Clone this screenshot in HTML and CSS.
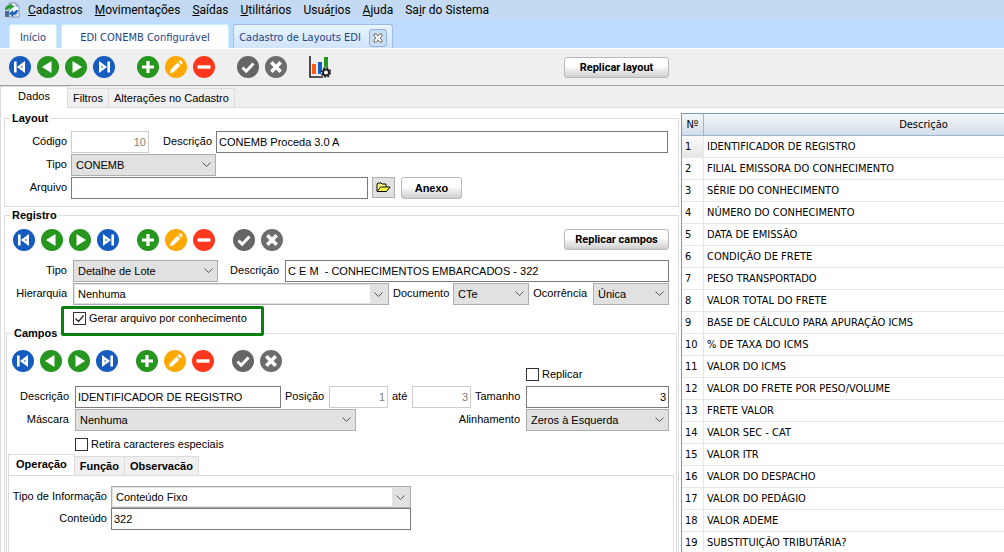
FILE: index.html
```html
<!DOCTYPE html>
<html lang="pt-BR">
<head>
  <meta charset="UTF-8">
  <meta name="viewport" content="width=device-width, initial-scale=1.0">
  <title>Cadastro de Layouts EDI</title>
  <link rel="stylesheet" href="styles.css">
</head>
<body>
  <!-- ícones -->
  <svg class="sprite" aria-hidden="true">
    <symbol id="i-first" viewBox="0 0 22 22"><circle cx="11" cy="11" r="11" fill="#165cbe"/><path d="M5 5.500h2.600v11H5z M16 5v12L7.900 11z" fill="#fff"/><path d="M13.400 9.700v2.600L11.600 11z" fill="#165cbe"/></symbol>
    <symbol id="i-prev" viewBox="0 0 22 22"><circle cx="11" cy="11" r="11" fill="#26961e"/><path d="M14.500 5v12L5 11z" fill="#fff"/></symbol>
    <symbol id="i-next" viewBox="0 0 22 22"><circle cx="11" cy="11" r="11" fill="#26961e"/><path d="M7.500 5v12l9.500-6z" fill="#fff"/></symbol>
    <symbol id="i-last" viewBox="0 0 22 22"><circle cx="11" cy="11" r="11" fill="#165cbe"/><path d="M14.400 5.500H17v11h-2.600z M6 5v12l8.100-6z" fill="#fff"/><path d="M8.600 9.700v2.600l1.800-1.300z" fill="#165cbe"/></symbol>
    <symbol id="i-add" viewBox="0 0 22 22"><circle cx="11" cy="11" r="11" fill="#26961e"/><path d="M11 5v12M5 11h12" stroke="#fff" stroke-width="3.200"/></symbol>
    <symbol id="i-edit" viewBox="0 0 22 22"><circle cx="11" cy="11" r="11" fill="#ffa800"/><path d="M5 17l.8-3.600 6.800-6.800 2.800 2.800-6.800 6.800z M13.500 5.700l1.100-1.100q.7-.5 1.300 0l1.500 1.500q.5.600 0 1.300l-1.100 1.100z" fill="#fff"/></symbol>
    <symbol id="i-del" viewBox="0 0 22 22"><circle cx="11" cy="11" r="11" fill="#ff371d"/><path d="M4.500 11h13" stroke="#fff" stroke-width="3.400"/></symbol>
    <symbol id="i-ok" viewBox="0 0 22 22"><circle cx="11" cy="11" r="11" fill="#666"/><path d="M5.500 11.500l3.700 3.700 7.300-7.700" fill="none" stroke="#fff" stroke-width="3"/></symbol>
    <symbol id="i-cancel" viewBox="0 0 22 22"><circle cx="11" cy="11" r="11" fill="#6c6c6c"/><path d="M6.300 6.300l9.400 9.400M15.700 6.300l-9.400 9.400" stroke="#fff" stroke-width="3.600"/></symbol>
  </svg>

  <nav class="menu">
    <svg class="logo" viewBox="0 0 16 16" aria-hidden="true">
      <path d="M5 1h7l3 3v11H5z" fill="#f4f7fb" stroke="#7c93b4"/>
      <path d="M12 1v3h3" fill="#c9d6e8" stroke="#7c93b4"/>
      <path d="M7 4.500h4M8 13h5" stroke="#9db3d0"/>
      <path d="M1 8q0-5 5-5V1l4 3.500L6 8V6Q4 6 3 8z" fill="#2d9a35"/>
      <path d="M14 8q0 5-5 5v2l-4-3.500L9 8v2q2 0 3-2z" fill="#2763b8"/>
      <path d="M1 9h4v6H1z" fill="#4c6f98"/>
    </svg>
    <a href="#"><u>C</u>adastros</a>
    <a href="#"><u>M</u>ovimentações</a>
    <a href="#"><u>S</u>aídas</a>
    <a href="#"><u>U</u>tilitários</a>
    <a href="#">Usuá<u>r</u>ios</a>
    <a href="#"><u>A</u>juda</a>
    <a href="#">Sa<u>i</u>r do Sistema</a>
  </nav>

  <div class="windows">
    <button class="win win-home">Início</button>
    <button class="win win-edi">EDI CONEMB Configurável</button>
    <div class="win active">
      <span>Cadastro de Layouts EDI</span>
      <button class="close" aria-label="Fechar">
        <svg viewBox="0 0 10 10" width="10" height="10"><path d="M1 1h2.500L5 3l1.500-2H9v2L7 5l2 2v2H6.500L5 7 3.500 9H1V7l2-2-2-2z" fill="#fff" stroke="#6e6e58"/></svg>
      </button>
    </div>
  </div>

  <div class="toolbar">
    <div class="toolbar-left">
      <div class="nav nav-main">
        <div class="group">
          <button aria-label="Primeiro"><svg><use href="#i-first"/></svg></button>
          <button aria-label="Anterior"><svg><use href="#i-prev"/></svg></button>
          <button aria-label="Próximo"><svg><use href="#i-next"/></svg></button>
          <button aria-label="Último"><svg><use href="#i-last"/></svg></button>
        </div>
        <div class="group">
          <button aria-label="Incluir"><svg><use href="#i-add"/></svg></button>
          <button aria-label="Alterar"><svg><use href="#i-edit"/></svg></button>
          <button aria-label="Excluir"><svg><use href="#i-del"/></svg></button>
        </div>
        <div class="group">
          <button aria-label="Gravar"><svg><use href="#i-ok"/></svg></button>
          <button aria-label="Cancelar"><svg><use href="#i-cancel"/></svg></button>
        </div>
        <button aria-label="Relatórios">
          <svg viewBox="0 0 22 22">
            <path d="M1 0v21h13" fill="none" stroke="#222" stroke-width="1.600"/>
            <path d="M3 8h4v10H3z" fill="#ff5a12"/>
            <path d="M9 6h4v12H9z" fill="#165cbe"/>
            <path d="M15 1h4v12h-4z" fill="#26961e"/>
            <circle cx="17" cy="16.500" r="5" fill="#efefef"/>
            <circle cx="17" cy="16.500" r="3" fill="#fff" stroke="#222" stroke-width="2"/>
            <circle cx="17" cy="16.500" r="4.500" fill="none" stroke="#222" stroke-width="1.600" stroke-dasharray="1.800 1.734"/>
          </svg>
        </button>
      </div>
      <button class="btn">Replicar layout</button>
    </div>
  </div>

  <div class="tabs">
    <button class="tab active tab-dados">Dados</button>
    <button class="tab">Filtros</button>
    <button class="tab">Alterações no Cadastro</button>
  </div>

  <main>
    <form class="form">
      <fieldset class="layout">
        <legend>Layout</legend>
        <div class="row">
          <label class="first" for="codigo">Código</label>
          <input class="codigo num" id="codigo" value="10" disabled>
          <label class="desc" for="descricao">Descrição</label>
          <input class="grow" id="descricao" value="CONEMB Proceda 3.0 A">
        </div>
        <div class="row">
          <label class="first" for="tipo">Tipo</label>
          <select class="tipo" id="tipo"><option>CONEMB</option></select>
        </div>
        <div class="row">
          <label class="first" for="arquivo">Arquivo</label>
          <input class="arquivo" id="arquivo">
          <button type="button" class="folder" aria-label="Abrir arquivo">
            <svg viewBox="0 0 15 11" width="15" height="11"><path d="M1 9V2l1-1h3l1 1h4v2.500" fill="#ffff8c" stroke="#000"/><path d="M1 9.500L4.500 5H14l-3.500 4.500z" fill="#ffff4a" stroke="#000"/></svg>
          </button>
          <button type="button" class="btn btn-anexo">Anexo</button>
        </div>
      </fieldset>

      <fieldset class="registro">
        <legend>Registro</legend>
        <div class="bar">
          <div class="nav">
            <div class="group">
              <button type="button" aria-label="Primeiro registro"><svg><use href="#i-first"/></svg></button>
              <button type="button" aria-label="Registro anterior"><svg><use href="#i-prev"/></svg></button>
              <button type="button" aria-label="Próximo registro"><svg><use href="#i-next"/></svg></button>
              <button type="button" aria-label="Último registro"><svg><use href="#i-last"/></svg></button>
            </div>
            <div class="group">
              <button type="button" aria-label="Incluir registro"><svg><use href="#i-add"/></svg></button>
              <button type="button" aria-label="Alterar registro"><svg><use href="#i-edit"/></svg></button>
              <button type="button" aria-label="Excluir registro"><svg><use href="#i-del"/></svg></button>
            </div>
            <div class="group">
              <button type="button" aria-label="Gravar registro"><svg><use href="#i-ok"/></svg></button>
              <button type="button" aria-label="Cancelar registro"><svg><use href="#i-cancel"/></svg></button>
            </div>
          </div>
          <button type="button" class="btn">Replicar campos</button>
        </div>
        <div class="row">
          <label class="first" for="reg-tipo">Tipo</label>
          <select class="tipo" id="reg-tipo"><option>Detalhe de Lote</option></select>
          <label class="desc" for="reg-desc">Descrição</label>
          <input class="grow" id="reg-desc" value="C E M  - CONHECIMENTOS EMBARCADOS - 322">
        </div>
        <div class="row">
          <label class="first" for="hierarquia">Hierarquia</label>
          <select class="combo grow" id="hierarquia"><option>Nenhuma</option></select>
          <label class="doc" for="documento">Documento</label>
          <select class="short" id="documento"><option>CTe</option></select>
          <label class="doc" for="ocorrencia">Ocorrência</label>
          <select class="short" id="ocorrencia"><option>Única</option></select>
        </div>
        <div class="check-row">
          <label class="check marked"><input type="checkbox" checked>Gerar arquivo por conhecimento</label>
        </div>

        <fieldset class="campos">
          <legend>Campos</legend>
          <div class="bar">
            <div class="nav">
              <div class="group">
                <button type="button" aria-label="Primeiro campo"><svg><use href="#i-first"/></svg></button>
                <button type="button" aria-label="Campo anterior"><svg><use href="#i-prev"/></svg></button>
                <button type="button" aria-label="Próximo campo"><svg><use href="#i-next"/></svg></button>
                <button type="button" aria-label="Último campo"><svg><use href="#i-last"/></svg></button>
              </div>
              <div class="group">
                <button type="button" aria-label="Incluir campo"><svg><use href="#i-add"/></svg></button>
                <button type="button" aria-label="Alterar campo"><svg><use href="#i-edit"/></svg></button>
                <button type="button" aria-label="Excluir campo"><svg><use href="#i-del"/></svg></button>
              </div>
              <div class="group">
                <button type="button" aria-label="Gravar campo"><svg><use href="#i-ok"/></svg></button>
                <button type="button" aria-label="Cancelar campo"><svg><use href="#i-cancel"/></svg></button>
              </div>
            </div>
            <label class="check replicar"><input type="checkbox">Replicar</label>
          </div>
          <div class="row">
            <label class="first" for="campo-desc">Descrição</label>
            <input class="grow" id="campo-desc" value="IDENTIFICADOR DE REGISTRO">
            <label class="pos" for="pos-de">Posição</label>
            <input class="posicao num" id="pos-de" value="1" disabled>
            <label class="ate" for="pos-ate">até</label>
            <input class="posicao num" id="pos-ate" value="3" disabled>
            <label class="tam" for="tamanho">Tamanho</label>
            <input class="tamanho num" id="tamanho" value="3">
          </div>
          <div class="row">
            <label class="first" for="mascara">Máscara</label>
            <select class="grow" id="mascara"><option>Nenhuma</option></select>
            <label class="alinha" for="alinhamento">Alinhamento</label>
            <select class="tamanho" id="alinhamento"><option>Zeros à Esquerda</option></select>
          </div>
          <div class="check-row">
            <label class="check"><input type="checkbox">Retira caracteres especiais</label>
          </div>

          <div class="subtabs">
            <button type="button" class="tab active">Operação</button>
            <button type="button" class="tab">Função</button>
            <button type="button" class="tab">Observacão</button>
          </div>
          <div class="panel">
            <div class="row">
              <label class="info" for="tipo-info">Tipo de Informação</label>
              <select class="combo conteudo" id="tipo-info"><option>Conteúdo Fixo</option></select>
            </div>
            <div class="row">
              <label class="info" for="conteudo">Conteúdo</label>
              <input class="conteudo" id="conteudo" value="322">
            </div>
          </div>
        </fieldset>
      </fieldset>
    </form>

    <div class="grid">
      <table>
        <thead>
          <tr><th class="n">Nº</th><th>Descrição</th></tr>
        </thead>
        <tbody>
          <tr class="current"><td>1</td><td>IDENTIFICADOR DE REGISTRO</td></tr>
          <tr><td>2</td><td>FILIAL EMISSORA DO CONHECIMENTO</td></tr>
          <tr><td>3</td><td>SÉRIE DO CONHECIMENTO</td></tr>
          <tr><td>4</td><td>NÚMERO DO CONHECIMENTO</td></tr>
          <tr><td>5</td><td>DATA DE EMISSÃO</td></tr>
          <tr><td>6</td><td>CONDIÇÃO DE FRETE</td></tr>
          <tr><td>7</td><td>PESO TRANSPORTADO</td></tr>
          <tr><td>8</td><td>VALOR TOTAL DO FRETE</td></tr>
          <tr><td>9</td><td>BASE DE CÁLCULO PARA APURAÇÃO ICMS</td></tr>
          <tr><td>10</td><td>% DE TAXA DO ICMS</td></tr>
          <tr><td>11</td><td>VALOR DO ICMS</td></tr>
          <tr><td>12</td><td>VALOR DO FRETE POR PESO/VOLUME</td></tr>
          <tr><td>13</td><td>FRETE VALOR</td></tr>
          <tr><td>14</td><td>VALOR SEC - CAT</td></tr>
          <tr><td>15</td><td>VALOR ITR</td></tr>
          <tr><td>16</td><td>VALOR DO DESPACHO</td></tr>
          <tr><td>17</td><td>VALOR DO PEDÁGIO</td></tr>
          <tr><td>18</td><td>VALOR ADEME</td></tr>
          <tr><td>19</td><td>SUBSTITUIÇÃO TRIBUTÁRIA?</td></tr>
        </tbody>
      </table>
    </div>
  </main>
</body>
</html>
```
FILE: styles.css
```css
* {
  box-sizing: border-box;
}
body {
  margin: 0;
  height: 100vh;
  overflow: hidden;
  display: flex;
  flex-direction: column;
  font: 11px/13px "Liberation Sans", Arial, sans-serif;
  color: #000;
  background: #fff;
}
button, input, select {
  font: inherit;
  color: inherit;
  margin: 0;
}
button {
  padding: 0;
  border: 0;
  background: none;
}
.sprite {
  position: absolute;
  width: 0;
  height: 0;
}

/* menu */
.menu {
  display: flex;
  align-items: center;
  gap: 12px;
  flex: none;
  height: 20px;
  padding-left: 4px;
  background: #c3daf2;
  font: 12px/18px Roboto, "Noto Sans", sans-serif;
}
.menu a {
  color: #000;
  text-decoration: none;
}
.logo {
  width: 16px;
  height: 16px;
  margin-right: -4px;
}

/* janelas abertas */
.windows {
  display: flex;
  align-items: flex-end;
  gap: 4px;
  flex: none;
  height: 29px;
  padding-left: 9px;
  background: #bfdbff;
  border-bottom: 1px solid #fff;
  font: 11px/20px "DejaVu Sans Condensed", Tahoma, sans-serif;
  color: #1f4484;
}
.win {
  display: flex;
  align-items: center;
  justify-content: center;
  height: 24px;
  padding-top: 2px;
  border: 1px solid #c9f3fb;
  border-bottom: 0;
  border-radius: 3px 3px 0 0;
  background: #fff;
  white-space: nowrap;
}
.win-home {
  width: 48px;
}
.win-edi {
  width: 168px;
}
.win.active {
  gap: 8px;
  width: 160px;
  border-color: #a0bcdf;
  background: linear-gradient(#e9f4ff, #d0e4fb);
}
.close {
  display: flex;
  align-items: center;
  justify-content: center;
  width: 18px;
  height: 18px;
  border: 1px solid #8fb2d9;
  border-radius: 3px;
  background: #c9ddf4;
}

/* barra de ferramentas */
.toolbar {
  display: grid;
  grid-template-columns: 681fr 323fr;
  flex: none;
  height: 37px;
  background: #efefef;
  border-bottom: 1px solid #a0a0a0;
}
.toolbar-left {
  display: flex;
  align-items: center;
  justify-content: space-between;
  padding: 0 12px 0 9px;
}
.nav {
  display: flex;
  gap: 18px;
}
.nav-main {
  gap: 22px;
}
.group {
  display: flex;
  gap: 6px;
}
.nav button {
  width: 22px;
  height: 22px;
}
.nav svg {
  display: block;
  width: 22px;
  height: 22px;
}
.btn {
  width: 105px;
  height: 21px;
  border: 1px solid #b9b9b9;
  border-radius: 3px;
  background: linear-gradient(#fff 45%, #f2f2f2 55%, #cfcfcf);
  font: bold 11px/15px Roboto, "Noto Sans", sans-serif;
}
.btn-anexo {
  width: 61px;
  height: 22px;
  margin-left: 2px;
  font: bold 11px/13px "Liberation Sans", Arial, sans-serif;
}

/* abas */
.tabs, .subtabs {
  display: flex;
  align-items: flex-end;
  flex: none;
}
.tabs {
  height: 22px;
  background: #efefef;
  border-bottom: 1px solid #dcdcdc;
}
.tab {
  height: 19px;
  padding: 0 5px;
  border: 1px solid #dcdcdc;
  border-left: 0;
  border-bottom: 0;
  background: #f0f0f0;
}
.tab.active {
  height: 22px;
  margin-bottom: -1px;
  padding-bottom: 2px;
  border-left: 1px solid #dcdcdc;
  background: #fff;
}
.tabs .tab-dados {
  width: 68px;
}

/* formulário */
main {
  display: grid;
  grid-template-columns: 681fr 323fr;
  grid-template-rows: 100%;
  flex: 1;
  min-height: 0;
}
.form {
  display: flex;
  flex-direction: column;
  min-width: 0;
  padding: 4px 2px 0 3px;
  border-left: 1px solid #dcdcdc;
}
fieldset {
  min-width: 0;
  margin: 0;
  padding: 6px 10px 7px 0;
  border: 1px solid #dcdcdc;
}
legend {
  margin-left: 5px;
  padding: 0 2px;
  font-weight: bold;
}
.registro {
  display: flex;
  flex-direction: column;
  flex: 1;
  margin-top: 2px;
  padding: 7px 0 0;
  border-bottom: 0;
}
.campos {
  display: flex;
  flex-direction: column;
  flex: 1;
  margin: 0 1px;
  padding: 10px 0 0;
  border-bottom: 0;
}
.row {
  display: flex;
  gap: 4px;
  margin-bottom: 1px;
}
.layout .row:last-child {
  margin-bottom: 0;
}
.registro .row {
  padding-right: 9px;
}
.campos .row {
  padding-right: 7px;
}
.row label {
  flex: none;
  padding-top: 4px;
  text-align: right;
  white-space: nowrap;
}
.registro .row label {
  padding-right: 2px;
}
.row .first {
  width: 62px;
}
.registro .row .first {
  width: 64px;
}
.row .desc {
  width: 59px;
}
.row .doc {
  width: 56px;
}
.row .pos {
  width: 40px;
}
.row .ate {
  width: 16px;
}
.row .tam {
  width: 47px;
}
.row .alinha {
  width: 162px;
}
.registro .row .info {
  width: 98px;
  padding-right: 0;
}
.row input, .row select {
  flex: none;
  min-width: 0;
  height: 22px;
  border: 1px solid #7a7a7a;
  border-radius: 0;
  background: #fff;
}
.row input {
  padding: 0 2px;
}
.row input:disabled {
  border-color: #ccc;
  color: #808080;
}
.row select {
  appearance: none;
  padding: 0 20px 0 4px;
  border-color: #adadad;
  background: #e1e1e1 url('data:image/svg+xml,<svg xmlns="http://www.w3.org/2000/svg" width="9" height="6"><path d="M.5.5l4 4 4-4" fill="none" stroke="%23555"/></svg>') no-repeat right 4px center;
}
.row .combo {
  background-color: #fff;
  background-image: url('data:image/svg+xml,<svg xmlns="http://www.w3.org/2000/svg" width="18" height="20"><path d="M0 0h18v20H0z" fill="%23e1e1e1"/><path d="M4.500 8.500l4 4 4-4" fill="none" stroke="%23555"/></svg>');
  background-position: right center;
  box-shadow: inset 0 0 0 1px #e1e1e1;
}
.row .grow {
  flex: 1;
}
.num {
  text-align: right;
}
.codigo {
  width: 78px;
}
.tipo {
  width: 145px;
}
.arquivo {
  width: 297px;
}
.short {
  width: 76px;
}
.posicao {
  width: 59px;
}
.tamanho {
  width: 143px;
}
.conteudo {
  width: 300px;
}
.folder {
  display: flex;
  align-items: center;
  justify-content: center;
  width: 23px;
  height: 21px;
  border: 1px solid #adadad;
  background: #e1e1e1;
}
.bar {
  display: flex;
  justify-content: space-between;
  height: 22px;
  margin-bottom: 9px;
  padding: 0 9px 0 8px;
}
.campos .bar {
  height: 31px;
  margin-bottom: 5px;
  padding: 0 7px 0 5px;
}
.check-row {
  margin: 6px 0 2px 68px;
}
.check {
  position: relative;
  display: flex;
  align-items: center;
  gap: 3px;
  width: fit-content;
}
.check input {
  appearance: none;
  width: 13px;
  height: 13px;
  border: 1px solid #333;
  background: #fff;
}
.check input:checked {
  background: url('data:image/svg+xml,<svg xmlns="http://www.w3.org/2000/svg" width="11" height="11"><path d="M1.500 5.500l3 3 5-6" fill="none" stroke="%23222" stroke-width="1.200"/></svg>');
}
.replicar {
  align-self: flex-end;
  width: 143px;
}
/* destaque em volta da opção */
.marked::after {
  content: "";
  position: absolute;
  inset: -6px -17px -11px -12px;
  border: 3px solid #078010;
  border-radius: 2px;
  z-index: 1;
}
.subtabs {
  margin: 1px 0 0 1px;
  font-weight: bold;
}
.subtabs .tab.active {
  padding: 0 7px 2px;
}
.panel {
  flex: 1;
  margin: 0 2px 0 1px;
  padding-top: 10px;
  border: 1px solid #dcdcdc;
  border-bottom: 0;
}
.panel .row {
  margin: 0;
}

/* lista de campos */
.grid {
  overflow: hidden;
  margin-top: 5px;
  border: 1px solid #8099b5;
  border-right: 0;
  border-bottom: 0;
  font: 11px/13px "DejaVu Sans Condensed", Tahoma, sans-serif;
}
table {
  width: 462px;
  table-layout: fixed;
  border-collapse: separate;
  border-spacing: 0;
}
th, td {
  height: 22px;
  padding: 0 3px;
  border-bottom: 1px solid #e4e7ec;
  text-align: left;
}
th {
  border-right: 1px solid #a0b6cf;
  border-bottom-color: #a0b6cf;
  background: linear-gradient(#f5f8fb, #d3dce9);
  font-weight: normal;
  text-align: center;
}
th.n {
  width: 22px;
  padding: 0;
}
td:first-child {
  border-right: 1px solid #e4e7ec;
}
.current td:first-child {
  background: linear-gradient(#fafafa, #e6e6e6);
}
```
